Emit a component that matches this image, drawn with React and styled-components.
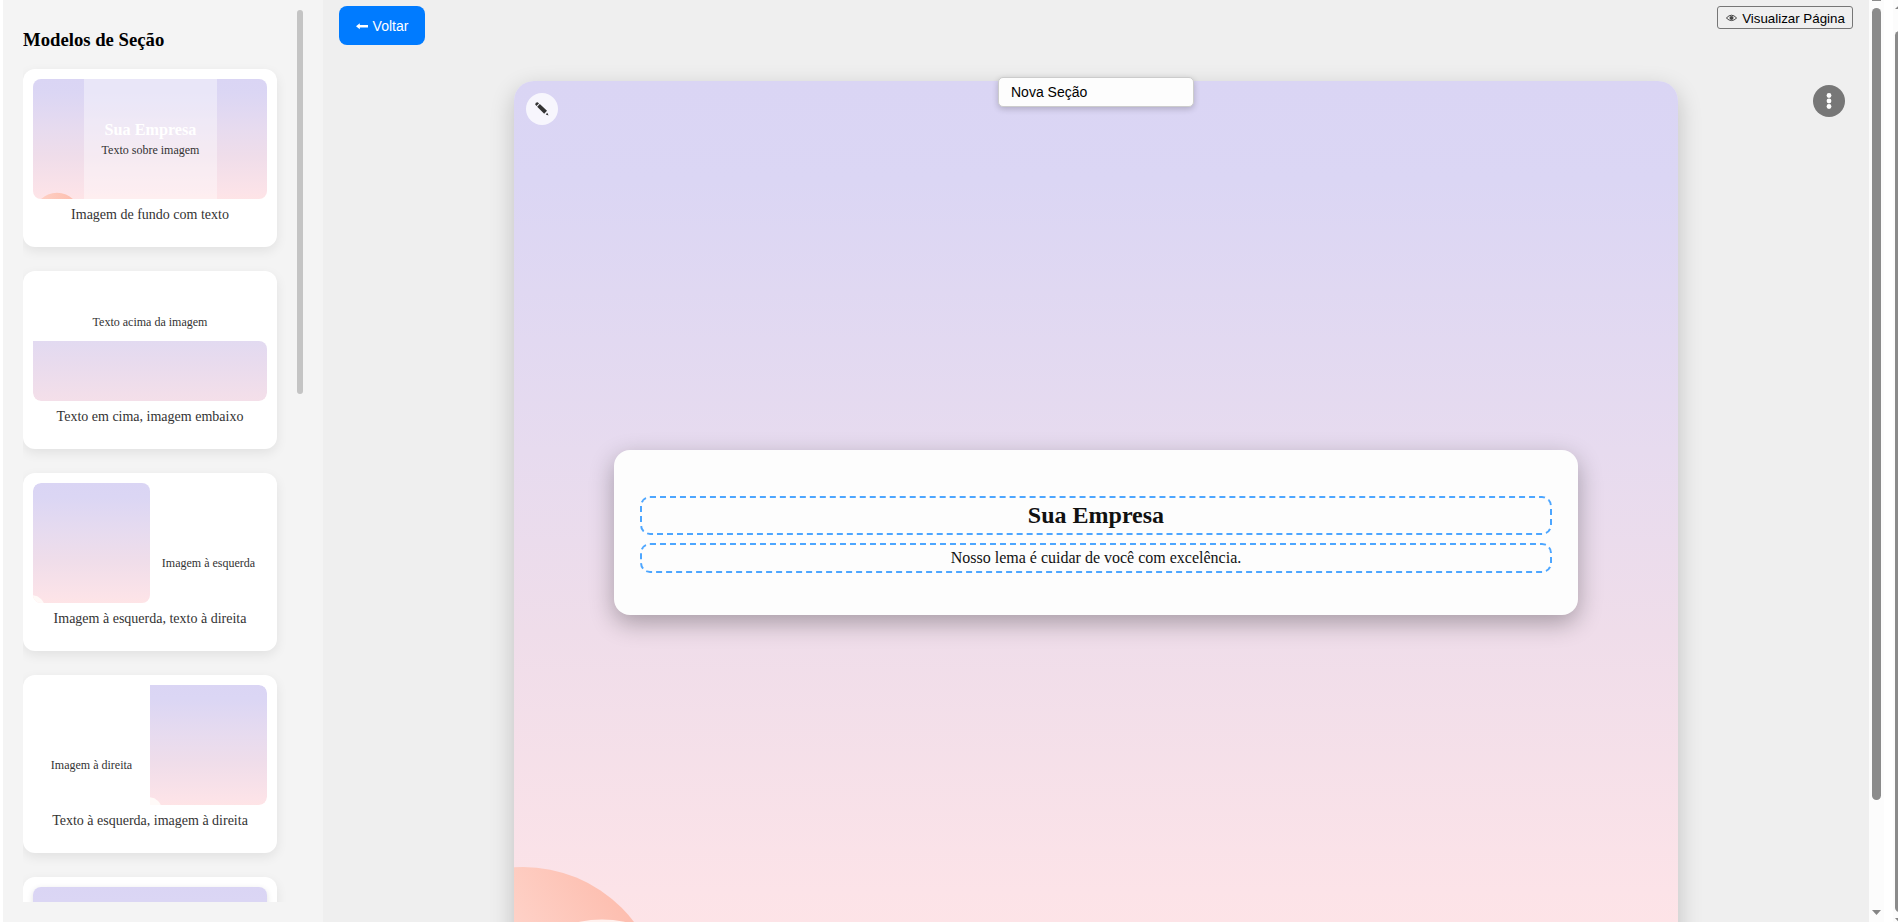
import React from "react";
import styled, { createGlobalStyle, css } from "styled-components";

const Global = createGlobalStyle`
  * { box-sizing: border-box; }
  html, body { margin: 0; background: #fff; overflow: hidden; }
  body { font-family: "Liberation Serif", serif; color: #000; }
  h3, h2, p { margin: 0; }
`;

const sky = css`
  background-image: linear-gradient(180deg, #dad5f4 0%, #dbd6f4 12%, #e7dbef 42%, #efddea 64%, #fce3e8 95%, #fee4e6 100%);
`;

const Page = styled.div`
  display: flex;
  width: 1898px;
  height: 923px;
  padding: 0 0 1px 3px;
  overflow: hidden;
`;

const Sidebar = styled.aside`
  position: relative;
  flex: 0 0 320px;
  padding: 0 20px 20px;
  background: #f4f4f4;
  display: flex;
`;

const SidebarThumb = styled.div`
  position: absolute;
  left: 294px;
  top: 10px;
  width: 6px;
  height: 384px;
  border-radius: 3px;
  background: #c4c4c4;
`;

const ModelList = styled.div`
  flex: 1;
  overflow: hidden;
  padding: 29px 26px 0 0;
  display: flex;
  flex-direction: column;
  gap: 24px;
`;

const SidebarTitle = styled.h3`
  font-size: 18.72px;
  line-height: 22px;
  margin-bottom: -6px;
`;

const ModelCard = styled.article`
  flex: 0 0 178px;
  padding: 10px;
  border-radius: 12px;
  background: #fff;
  box-shadow: 0 4px 12px rgba(0, 0, 0, 0.08);
`;

const Preview = styled.div`
  height: 120px;
  border-radius: 8px;
  overflow: hidden;
  display: flex;
  flex-direction: ${(p) => p.$direction || "row"};
  ${(p) => p.$filled && sky}
  ${(p) => p.$filled && css`position: relative; justify-content: center;`}
  ${(p) => p.$raised && css`box-shadow: 0 2px 6px rgba(0, 0, 0, 0.12);`}
`;

const Overlay = styled.div`
  width: 133px;
  margin-left: 1px;
  padding-top: 42px;
  text-align: center;
  background: rgba(255, 255, 255, 0.4);
`;

const OverlayTitle = styled.h3`
  font-size: 16.2px;
  line-height: 18px;
  color: #fff;
`;

const PreviewText = styled.p`
  font-size: 12px;
  line-height: 14px;
  color: #333;
  text-align: center;
  padding-top: ${(p) => p.$top || 0}px;
  flex: ${(p) => p.$basis || "0 0 auto"};
`;

const PreviewImage = styled.div`
  flex: ${(p) => p.$basis};
  border-radius: ${(p) => p.$radius};
  overflow: hidden;
  display: flex;
  align-items: flex-end;
  ${(p) => (p.$band ? css`background: linear-gradient(#e2daf1, #e8dbee 35%, #f4dfe9);` : sky)}
`;

const CardLabel = styled.p`
  margin-top: 8px;
  font-size: 14px;
  line-height: 16px;
  color: #333;
  text-align: center;
`;

const Shape = styled.svg`
  position: absolute;
  left: 0;
  bottom: 0;
  display: block;
`;

const Workspace = styled.main`
  flex: 0 0 1546px;
  display: flex;
  flex-direction: column;
  background: #efefef;
  overflow: hidden;
`;

const Toolbar = styled.header`
  flex: 0 0 81px;
  padding: 6px 16px 0;
  display: flex;
  justify-content: space-between;
  align-items: flex-start;
`;

const BackButton = styled.button`
  display: flex;
  align-items: center;
  justify-content: center;
  gap: 5px;
  width: 86px;
  height: 39px;
  padding: 0;
  border: 0;
  border-radius: 8px;
  background: #007bff;
  color: #fff;
  font: 14px "Liberation Sans", Arial, sans-serif;
`;

const ViewButton = styled.button`
  display: flex;
  align-items: center;
  justify-content: center;
  gap: 5px;
  width: 136px;
  height: 23px;
  padding: 1px 0 0 1px;
  border: 1px solid #767676;
  border-radius: 3px;
  background: #efefef;
  color: #000;
  font: 13.33px "Liberation Sans", Arial, sans-serif;
  white-space: nowrap;
`;

const SectionRow = styled.div`
  flex: 1;
  display: flex;
  padding-left: 191px;
`;

const Canvas = styled.section`
  position: relative;
  flex: 0 0 1164px;
  height: 1000px;
  padding: 369px 100px 0;
  border-radius: 20px;
  background: linear-gradient(180deg, #dad5f4 0, #dbd6f4 100px, #e7dbef 370px, #efddea 550px, #fce3e8 810px, #fee4e6 870px);
  box-shadow: 0 8px 24px rgba(0, 0, 0, 0.2);
`;

const CanvasShape = styled.svg`
  position: absolute;
  left: 0;
  top: 780px;
`;

const EditButton = styled.button`
  position: absolute;
  left: 12px;
  top: 12px;
  width: 32px;
  height: 32px;
  padding: 0;
  border: 0;
  border-radius: 50%;
  background: #f7f6fd;
  display: grid;
  place-items: center;
`;

const SectionName = styled.input`
  position: absolute;
  left: 484px;
  top: -4px;
  width: 196px;
  height: 30px;
  padding: 0 12px;
  border: 1px solid #ccc;
  border-radius: 5px;
  background: #fdfdfd;
  color: #000;
  font: 14px "Liberation Sans", Arial, sans-serif;
  box-shadow: 0 2px 6px rgba(0, 0, 0, 0.2);
`;

const Hero = styled.div`
  position: relative;
  height: 165px;
  padding: 46px 26px 0;
  border-radius: 16px;
  background: #fdfdfd;
  box-shadow: 0 8px 24px rgba(0, 0, 0, 0.3);
  text-align: center;
  display: flex;
  flex-direction: column;
  gap: 8px;
`;

const editable = css`
  border: 2px dashed #4da6ff;
  border-radius: 10px;
  color: #111;
`;

const HeroTitle = styled.h2`
  ${editable}
  height: 39px;
  font-size: 24px;
  line-height: 35px;
`;

const HeroText = styled.p`
  ${editable}
  height: 30px;
  font-size: 16px;
  line-height: 26px;
`;

const MenuButton = styled.button`
  margin: 4px 0 0 135px;
  width: 32px;
  height: 32px;
  padding: 0;
  border: 0;
  border-radius: 50%;
  background: #777;
  display: grid;
  place-items: center;
`;

const InnerScrollbar = styled.div`
  flex: 0 0 15px;
  background: #fcfcfc;
  display: flex;
  flex-direction: column;
  align-items: center;
  justify-content: space-between;
  padding-bottom: 7px;
`;

const InnerThumb = styled.div`
  width: 9px;
  height: 792px;
  margin-top: 7px;
  border-radius: 5px;
  background: #8b8b8b;
`;

const TrackTop = styled.div`
  height: 1px;
  width: 9px;
  background: #8b8b8b;
`;

const ThumbGroup = styled.div`
  display: flex;
  flex-direction: column;
  align-items: center;
`;

const OuterScrollbar = styled.div`
  flex: 1;
  overflow: hidden;
  padding: 5px 0 0 11px;
  background: linear-gradient(90deg, #fff 0 9px, #fcfcfc 9px);
`;

const OuterThumb = styled.div`
  width: 9px;
  height: 881px;
  margin: 21px 0 6px;
  border-radius: 5px;
  background: #8b8b8b;
`;

const Arrow = ({ up }) => (
  <svg width="9" height="5" viewBox="0 0 9 5" style={{ display: "block" }}>
    <path d={up ? "M0 4L4.5 0L9 4Z" : "M0 0H9L4.5 5Z"} fill="#858585" />
  </svg>
);

const CornerShape = () => (
  <svg width="12" height="9" viewBox="0 0 12 9">
    <circle cx="-1" cy="14" r="12.8" fill="#fffaf8" />
  </svg>
);

export default function App() {
  return (
    <>
      <Global />
      <Page>
        <Sidebar>
          <ModelList>
            <SidebarTitle>Modelos de Seção</SidebarTitle>
            <ModelCard>
              <Preview $filled>
                <Shape width="60" height="10" viewBox="0 0 60 10">
                  <defs>
                    <linearGradient id="miniPeach">
                      <stop offset="0" stopColor="#fed3c8" />
                      <stop offset="1" stopColor="#fdbcac" />
                    </linearGradient>
                  </defs>
                  <circle cx="24" cy="27.2" r="23.4" fill="url(#miniPeach)" />
                </Shape>
                <Overlay>
                  <OverlayTitle>Sua Empresa</OverlayTitle>
                  <PreviewText $top={4}>Texto sobre imagem</PreviewText>
                </Overlay>
              </Preview>
              <CardLabel>Imagem de fundo com texto</CardLabel>
            </ModelCard>
            <ModelCard>
              <Preview $direction="column">
                <PreviewText $top={34} $basis="0 0 60px">Texto acima da imagem</PreviewText>
                <PreviewImage $band $basis="0 0 60px" $radius="0 8px 8px 8px" />
              </Preview>
              <CardLabel>Texto em cima, imagem embaixo</CardLabel>
            </ModelCard>
            <ModelCard>
              <Preview>
                <PreviewImage $basis="0 0 117px" $radius="8px 8px 8px 0">
                  <CornerShape />
                </PreviewImage>
                <PreviewText $top={73} $basis="1">Imagem à esquerda</PreviewText>
              </Preview>
              <CardLabel>Imagem à esquerda, texto à direita</CardLabel>
            </ModelCard>
            <ModelCard>
              <Preview>
                <PreviewText $top={73} $basis="1">Imagem à direita</PreviewText>
                <PreviewImage $basis="0 0 117px" $radius="0 8px 8px 0">
                  <CornerShape />
                </PreviewImage>
              </Preview>
              <CardLabel>Texto à esquerda, imagem à direita</CardLabel>
            </ModelCard>
            <ModelCard>
              <Preview $filled $raised />
            </ModelCard>
          </ModelList>
          <SidebarThumb />
        </Sidebar>

        <Workspace>
          <Toolbar>
            <BackButton>
              <svg width="12" height="8" viewBox="0 0 12 8">
                <path d="M0 4.2L3.8 1.2V2.9H12V5.5H3.8V7.2Z" fill="#fff" />
              </svg>
              Voltar
            </BackButton>
            <ViewButton>
              <svg width="11" height="8" viewBox="0 0 11 8" fill="none" stroke="#333" strokeWidth=".9">
                <path d="M.4 4Q5.5-1.6 10.6 4Q5.5 9.2 .4 4Z" />
                <circle cx="5.5" cy="3.9" r="1.5" fill="#444" />
              </svg>
              Visualizar Página
            </ViewButton>
          </Toolbar>
          <SectionRow>
            <Canvas>
              <CanvasShape width="140" height="62" viewBox="0 0 140 62">
                <defs>
                  <linearGradient id="peach" gradientUnits="userSpaceOnUse" x1="0" y1="60" x2="95" y2="5">
                    <stop offset="0" stopColor="#fed1c7" />
                    <stop offset="1" stopColor="#fdbdae" />
                  </linearGradient>
                </defs>
                <circle cx="9" cy="145.5" r="139.5" fill="url(#peach)" />
                <circle cx="88" cy="172.5" r="114" fill="#fff1ee" />
              </CanvasShape>
              <EditButton aria-label="Editar">
                <svg width="16" height="16" viewBox="0 0 16 16" fill="#333">
                  <path d="M1.2 3.5Q1.2 1.2 3.7 1.2L5 2.4L2.4 5Z" />
                  <path d="M5.8 3L13 9.8L10.2 12.7L3.2 5.8Z" />
                  <path d="M13.2 11.8L14.6 14.6L11.8 13.4Z" />
                </svg>
              </EditButton>
              <SectionName defaultValue="Nova Seção" />
              <Hero>
                <HeroTitle>Sua Empresa</HeroTitle>
                <HeroText>Nosso lema é cuidar de você com excelência.</HeroText>
              </Hero>
            </Canvas>
            <MenuButton aria-label="Menu">
              <svg width="6" height="18" viewBox="0 0 6 18" fill="#fff">
                <circle cx="3" cy="3.5" r="2.4" />
                <circle cx="3" cy="9" r="2.4" />
                <circle cx="3" cy="14.5" r="2.4" />
              </svg>
            </MenuButton>
          </SectionRow>
        </Workspace>

        <InnerScrollbar>
          <ThumbGroup>
            <TrackTop />
            <InnerThumb />
          </ThumbGroup>
          <Arrow />
        </InnerScrollbar>
        <OuterScrollbar>
          <Arrow up />
          <OuterThumb />
          <Arrow />
        </OuterScrollbar>
      </Page>
    </>
  );
}
